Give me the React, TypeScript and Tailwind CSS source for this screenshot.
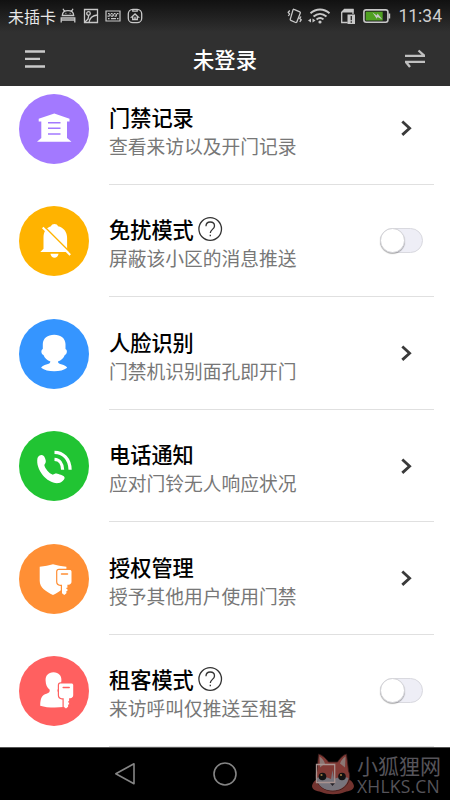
import { useState } from 'react'
import type { ReactNode } from 'react'

interface Item {
  id: string
  title: string
  desc: string
  color: string
  icon: ReactNode
  toggle?: boolean
}

const items: Item[] = [
  {
    id: 'records',
    title: '门禁记录',
    desc: '查看来访以及开门记录',
    color: 'bg-[#a379ff]',
    icon: (
      <>
        <path fill="#fff" d="M35.3 19.5 50.5 24.8v2.8H48V44l4.5 3.8H18l4.3-3.8V27.6h-2.6v-2.8z" />
        <path stroke="#a379ff" strokeWidth="1.5" d="M29 28.8h12.5M29 34.3h12.5M29 40h12.5" />
      </>
    ),
  },
  {
    id: 'dnd',
    title: '免扰模式',
    desc: '屏蔽该小区的消息推送',
    color: 'bg-[#ffb300]',
    toggle: true,
    icon: (
      <>
        <path
          fill="#fff"
          d="M32 20.300c.5-1.400 1.800-2.200 3.500-2.200s3 .8 3.500 2.200c5.700 1.200 9.100 5.800 9.100 11.500v11l2.200 3.200H21.300l3.200-3.200v-11c0-5.700 2.300-10 7.500-11.500z"
        />
        <path fill="#fff" d="M31.500 47.700h8c-.3 2.500-1.900 4-4 4s-3.700-1.500-4-4z" />
        <path stroke="#ffb300" strokeWidth="1.600" d="M25 20.300 52.500 47.800" />
        <path stroke="#fff" strokeWidth="2" d="M23.700 21.500 51.200 49" />
      </>
    ),
  },
  {
    id: 'face',
    title: '人脸识别',
    desc: '门禁机识别面孔即开门',
    color: 'bg-[#3595ff]',
    icon: (
      <path
        fill="#fff"
        d="M35.200 15.700c6.700 0 11.100 3.600 11.300 9.300v5c1.900.6 2 5-.7 6-1.200 3.200-3.600 5.300-6.900 6.500.3 1.800 1.500 2.300 4.100 3 2.200.6 4 1.500 5.200 3.300-3.200 2.500-7.700 3.500-13 3.500s-10-1-13.100-3.500c1.200-1.800 3-2.700 5.200-3.300 2.600-.7 3.800-1.200 4.100-3-3.300-1.200-5.700-3.300-6.900-6.500-2.700-1-2.600-5.400-.7-6v-5c.2-5.700 4.700-9.300 11.400-9.300z"
      />
    ),
  },
  {
    id: 'call',
    title: '电话通知',
    desc: '应对门铃无人响应状况',
    color: 'bg-[#21c433]',
    icon: (
      <>
        <path
          fill="#fff"
          d="M18.500 27c.8-1.800 2.500-3 4.300-2.900 2 .1 3.200 2.500 3.900 5.100.5 2.200-.6 3.500-1.400 4.800.9 3.800 4.600 8.200 8.600 9.800 1.300-1 2.700-1.700 4.500-1.100 2.700.9 7.200 1.700 7.200 4 0 2-2.600 4.500-5.800 5.300-10.300 1.700-23.800-12.700-21.300-25z"
        />
        <path
          fill="none"
          stroke="#fff"
          strokeWidth="3.2"
          d="M35.500 21.300c8.500 0 15.300 6.500 15.600 17.400M35.500 28.300c4.700.1 8 4 8.100 10.400"
        />
      </>
    ),
  },
  {
    id: 'auth',
    title: '授权管理',
    desc: '授予其他用户使用门禁',
    color: 'bg-[#ff8f35]',
    icon: (
      <>
        <path
          fill="#fff"
          d="M20.700 22.700c5-.4 9.400-1.300 13.300-2.500 4 1.200 8.300 2.100 13.400 2.500v14c0 6.900-6.400 11-13.400 14.200-7-3.200-13.300-7.300-13.300-14.200z"
        />
        <KeyShape bg="#ff8f35" />
      </>
    ),
  },
  {
    id: 'tenant',
    title: '租客模式',
    desc: '来访呼叫仅推送至租客',
    color: 'bg-[#ff6060]',
    toggle: true,
    icon: (
      <>
        <path
          fill="#fff"
          d="M34.500 16.300c5.400 0 8.200 3.600 7.900 8.200-.2 4.600-1.600 7-3.900 9.300-.2 2 .5 2.800 2.500 3.500l3.500 1.500v12.300c-8 .8-17.300.6-23.300-1.400.2-7.700 1.800-10.500 6.300-11.900 2.700-.8 3.400-1.800 3.200-4-2.600-2.300-4-4.700-4.100-9.300-.2-4.600 2.500-8.200 7.900-8.200z"
        />
        <g transform="translate(1.700 1.500)">
          <KeyShape bg="#ff6060" />
        </g>
      </>
    ),
  },
]

function KeyShape({ bg }: { bg: string }) {
  return (
    <>
      <path
        fill="#fff"
        stroke={bg}
        strokeWidth="2.400"
        strokeLinejoin="round"
        paintOrder="stroke"
        d="M40 25.900h10.800c1 0 1.700.7 1.700 1.700v10.200c0 1.600-1.300 2.900-2.900 2.900h-1.200v3h-1v1.300h1v2h-1v2.200l-2.100 1.700-2.300-1.700v-8.500h-1.800c-1.600 0-2.900-1.300-2.900-2.900V27.600c0-1 .7-1.700 1.700-1.700z"
      />
      <path stroke={bg} strokeWidth="1.500" strokeLinecap="round" d="M42.500 30h6" />
    </>
  )
}

function StatusBar() {
  return (
    <div className="flex h-8 items-center justify-between bg-linear-to-b from-[#111] to-[#303030] px-2 text-[#c8c8c8]">
      <div className="flex items-center">
        <span className="text-[16px] leading-8 text-[#e8e8e8]">未插卡</span>
        <svg className="ml-1 h-4 w-4" viewBox="0 0 16 16" fill="none" stroke="currentColor" strokeWidth="1.300">
          <path d="M2.300 7.500C2.500 4.300 5 2.700 8 2.700s5.500 1.600 5.700 4.800zM4.500 3.500 3 .8M11.500 3.500 13 .8M1.200 14.500V10h13.600v4.500M1 12h14M5.500 5.400h.8M9.700 5.400h.8" />
        </svg>
        <svg className="ml-[7px] h-4 w-4" viewBox="0 0 16 16" fill="none" stroke="currentColor" strokeWidth="1.300">
          <path d="M1.500 1.500h13v13h-13z" />
          <circle cx="5.500" cy="5.500" r="1.800" />
          <path d="m1.500 14.500 4-4M6 14.500c.5-4 3-7 8.500-7.500M5.800 7.300l-.8 3.500" />
        </svg>
        <svg className="ml-1.5 h-4 w-4" viewBox="0 0 16 16" fill="none" stroke="currentColor" strokeWidth="1.200">
          <path d="M1 3h14v10H1z" />
          <path d="M3 5.700h1.500M6 5.700h1.500M9 5.700h1.500M12 5.700h1.500M2.500 8.200h2M6 8.200h2M9.500 8.200h2M3 10.700h1.500M6 10.700h5M12 10.700h1.500M5 5.700v2.500M8.200 5.700v2.500M11.300 5.700v2.500" />
        </svg>
        <svg className="ml-1.5 h-4 w-4" viewBox="0 0 16 16" fill="none" stroke="currentColor" strokeWidth="1.300">
          <rect x="1.300" y="1.300" width="13.400" height="13.400" rx="4.500" />
          <path d="M5.800 1.500v1.700h4.400V1.500" />
          <path d="M8 6 4.700 9h1v2.500h4.600V9h1zM8 8.800v2.700" />
        </svg>
      </div>
      <div className="flex items-center">
        <svg className="h-4 w-4" viewBox="0 0 16 16" fill="none" stroke="currentColor" strokeWidth="1.300">
          <path d="m7 1.300 5.800 2.500c.5.200.7.700.5 1.200L9.800 14c-.2.500-.7.700-1.200.5l-4.800-2.200c-.5-.2-.7-.7-.5-1.200L6 1.900c.2-.6.600-.8 1-.6zM2.800 2.500 1.200 4.300 2.600 6 1.300 8M14 8.500l-1.300 2 1.500 1.300-1.400 2" />
        </svg>
        <svg className="ml-[5px] h-4 w-[23px]" viewBox="0 0 23 16" fill="none" stroke="currentColor" strokeWidth="1.900">
          <path d="M2.500 5.200c5.500-5 13.500-5 19 0M5.500 8.500c4-3.500 9-3.500 13 0M8.500 11.400c2.300-1.900 4.800-1.900 7 0" />
          <circle cx="12" cy="14" r="1.600" fill="currentColor" stroke="none" />
          <path fill="currentColor" stroke="none" d="m0 12.500 3-2v4zM4.500 10.500l3 2-3 2z" />
        </svg>
        <svg className="ml-[9px] h-4 w-4" viewBox="0 0 16 16">
          <path fill="none" stroke="currentColor" strokeWidth="1.300" d="M13 6V1.500H4.500L1.700 4.300v10.200h6" />
          <path fill="currentColor" d="M4.500 1h9v3.500H1.700zM7.500 6.500H15V16H7.500z" />
          <path stroke="#303030" strokeWidth="1.400" d="M11.300 8v4.200M11.300 13.300v1.400" />
        </svg>
        <svg className="ml-[7px] h-4 w-7" viewBox="0 0 28 16">
          <rect x=".9" y="1.900" width="24" height="12.300" rx="2.200" fill="none" stroke="currentColor" strokeWidth="1.600" />
          <path fill="#4fa021" d="M2.700 3.700h17v8.800h-17z" />
          <path fill="currentColor" d="M25.500 5.500h1.700v5h-1.700zM9.500 4.500l4.300 3 .8-2 4.700 6-4.700-2.500-.8 1.700z" />
        </svg>
        <span className="ml-[7px] font-[Roboto] text-[17.5px] leading-8 text-[#cfcfcf]">11:34</span>
      </div>
    </div>
  )
}

function Header() {
  return (
    <div className="flex h-[54px] items-center justify-between bg-[#303030] px-[25px]">
      <button title="菜单">
        <svg className="h-5 w-5" viewBox="0 0 20 20" stroke="#c9c9c9" strokeWidth="2.300">
          <path d="M0 2.500h20M0 9.800h15M0 17.500h20" />
        </svg>
      </button>
      <h1 className="text-[21.3px] font-medium text-white">未登录</h1>
      <button title="切换">
        <svg className="h-5 w-5" viewBox="0 0 20 20" fill="none" stroke="#c0c0c0" strokeWidth="2.300">
          <path d="M0 6.800h19.500L13.500 1.500M20 12.800H.8L5 18" />
        </svg>
      </button>
    </div>
  )
}

function Toggle() {
  const [on, setOn] = useState(false)
  return (
    <button
      onClick={() => setOn(!on)}
      className={`flex h-[25px] w-[43px] items-center rounded-full border border-[#d9d9df] ${on ? 'justify-end bg-green-400' : 'bg-[#eeeef6]'}`}
    >
      <span className="-ml-px h-[25px] w-[25px] rounded-full border border-[#d4d4d8] bg-white shadow-[0_1px_1px_rgba(0,0,0,0.3)]" />
    </button>
  )
}

function Row({ item }: { item: Item }) {
  return (
    <div className="flex h-[112.5px] items-center pl-[19px]">
      <div className={`mt-px h-[70px] w-[70px] shrink-0 rounded-full ${item.color}`}>
        <svg className="h-[70px] w-[70px]" viewBox="0 0 70 70">
          {item.icon}
        </svg>
      </div>
      <div className="mr-4 ml-5 flex h-full flex-1 items-center justify-between border-b border-[#e0e0e0]">
        <div className="pt-[7px]">
          <div className="flex h-7 items-center gap-1">
            <h2 className="text-[21.2px] leading-7 font-medium whitespace-nowrap text-black">{item.title}</h2>
            {item.toggle && (
              <svg className="h-[25px] w-[25px]" viewBox="0 0 25 25" fill="none" stroke="#333" strokeWidth="1.300">
                <circle cx="12.200" cy="12" r="11.300" />
                <path d="M8 9.300C8 6.700 9.700 5 12.200 5s4.300 1.600 4.300 3.900c0 3.400-4.200 3.600-4.200 7.200M12.300 17.800v1.500" />
              </svg>
            )}
          </div>
          <p className="text-[18.75px] leading-[29px] whitespace-nowrap text-[#777]">{item.desc}</p>
        </div>
        {item.toggle ? (
          <div className="mt-px mr-[11px]">
            <Toggle />
          </div>
        ) : (
          <svg className="mt-px mr-[21px] h-4 w-3" viewBox="0 0 12 16" fill="none" stroke="#3a3a3a" strokeWidth="2.800">
            <path d="m1.300 1.500 7.300 6.700-7.300 6.700" />
          </svg>
        )}
      </div>
    </div>
  )
}

function Watermark() {
  return (
    <div className="absolute top-1 left-[310px] flex items-center text-[#56545a]">
      <svg className="h-11 w-[45px]" viewBox="0 0 45 44">
        <path fill="#72332f" d="M2 34c1-6 7-8 11-9h19c5 1 11 3 12 9 0 4-5 5-9 6-7 3-17 3-24 0-4-1-9-2-9-6z" />
        <path fill="#813a35" stroke="#321a19" strokeWidth=".8" d="M7 19 8.500 2c4 1 8 5 10 8h9c2-3 5-7 9-8l2 17c4 9-3 20-15.500 20S3 28 7 19z" />
        <path fill="#8b7774" d="M9.500 4.500c3 2 4.500 4 5.500 7l-5 4zM35.500 4.500c-3 2-4.500 4-5.500 7l5 4z" />
        <path fill="#77747c" d="M6.500 26c5-2 11-1 14.500 1l1.500-9L24 27c4-2 10-3 14.500-1-1 8-8 12.500-16 12.500S7.500 34 6.500 26z" />
        <circle cx="12.500" cy="24.500" r="3.800" fill="#111" />
        <circle cx="32" cy="24.500" r="3.800" fill="#111" />
        <circle cx="11.500" cy="23" r="1.100" fill="#9b7740" />
        <circle cx="31" cy="23" r="1.100" fill="#9b7740" />
        <path fill="#232027" d="M20 31h5l-2.500 3z" />
        <path fill="none" stroke="#a99390" strokeWidth="1.300" d="M6.500 12.500h18.200v18H6.500z" />
      </svg>
      <div className="ml-0.5">
        <p className="text-[21px] leading-[23px] whitespace-nowrap">小狐狸网</p>
        <p className="font-['Open_Sans',sans-serif] text-[17.5px] leading-[18px] tracking-[0.2px] whitespace-nowrap">XHLKS.CN</p>
      </div>
    </div>
  )
}

function NavBar() {
  return (
    <div className="relative flex h-[53px] items-center border-t border-[#555] bg-black pl-[114px] text-[#858585]">
      <svg className="h-6 w-6" viewBox="0 0 24 24" fill="none" stroke="currentColor" strokeWidth="1.600" strokeLinejoin="round">
        <path d="M20 1.800v20L1.800 11.800z" />
      </svg>
      <svg className="ml-[75px] h-6 w-6" viewBox="0 0 24 24" fill="none" stroke="currentColor" strokeWidth="1.600">
        <circle cx="12" cy="12" r="11" />
      </svg>
      <Watermark />
    </div>
  )
}

export default function App() {
  return (
    <div className="flex h-[800px] w-[450px] flex-col overflow-hidden bg-white font-['Noto_Sans_CJK_SC',sans-serif]">
      <StatusBar />
      <Header />
      <div className="flex-1 overflow-hidden">
        {/* list is scrolled slightly under the header */}
        <div className="-mt-[14px]">
          {items.map(item => (
            <Row key={item.id} item={item} />
          ))}
        </div>
      </div>
      <NavBar />
    </div>
  )
}
